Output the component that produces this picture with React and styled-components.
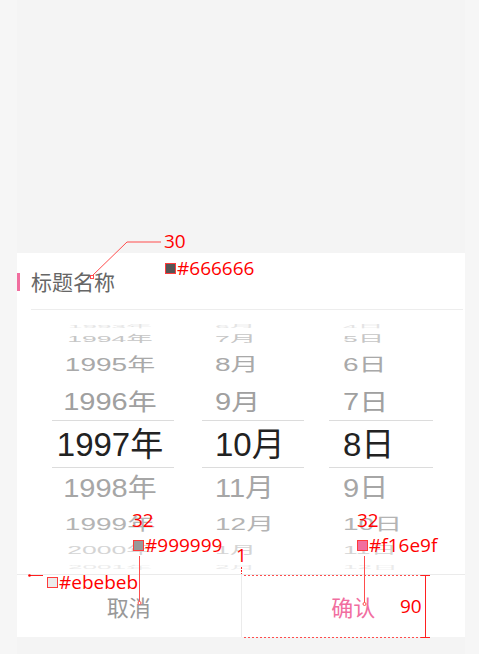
import React from "react";
import styled, { createGlobalStyle } from "styled-components";

const Global = createGlobalStyle`
  html, body { margin: 0; padding: 0; background: #f6f6f6; }
  #root { width: 479px; height: 654px; }
`;

const Page = styled.div`
  position: relative;
  width: 479px;
  height: 654px;
  box-sizing: border-box;
  padding: 0 14px 0 17px;
  background: #f6f6f6;
  overflow: hidden;
`;

const Column = styled.div`
  height: 100%;
  display: flex;
  flex-direction: column;
  justify-content: flex-end;
  padding-bottom: 17px;
  box-sizing: border-box;
  background: #f4f4f4;
`;

const Sheet = styled.div`
  height: 384px;
  background: #fff;
  display: flex;
  flex-direction: column;
`;

const Header = styled.div`
  display: flex;
  align-items: center;
`;

const Accent = styled.div`
  width: 3px;
  height: 18px;
  background: #f16e9f;
`;

const TitleWrap = styled.div`
  flex: 1;
  height: 56px;
  margin-left: 11px;
  margin-right: 2px;
  border-bottom: 1px solid #ededed;
  display: flex;
  align-items: center;
`;

const Title = styled.div`
  font-family: "Noto Sans CJK SC", sans-serif;
  font-size: 21px;
  color: #666666;
  line-height: 1;
`;

const PickerGrid = styled.div`
  height: 264px;
  box-sizing: border-box;
  padding: 10px 35px 0 35px;
  display: grid;
  grid-template-columns: 122px 102px 101px;
  column-gap: 28px;
  justify-content: start;
`;

const Wheel = styled.div`
  display: flex;
  flex-direction: column;
  margin-left: ${(p) => p.$ml}px;
`;

const Row = styled.div`
  height: ${(p) => p.$h}px;
  box-sizing: border-box;
  display: flex;
  align-items: center;
  justify-content: ${(p) => (p.$align === "center" ? "center" : "flex-start")};
  padding-left: ${(p) => p.$pl}px;
  padding-right: ${(p) => p.$pr}px;
  border-top: ${(p) => (p.$sel ? "1px solid #dcdcdc" : "none")};
  border-bottom: ${(p) => (p.$sel ? "1px solid #dcdcdc" : "none")};
  overflow: hidden;
`;

const Label = styled.span`
  font-family: "Liberation Sans", "Noto Sans CJK SC", sans-serif;
  font-size: ${(p) => p.$fs}px;
  color: ${(p) => p.$c};
  line-height: 1;
  white-space: nowrap;
  transform: scaleY(${(p) => p.$sy});
  transform-origin: ${(p) => (p.$align === "center" ? "center" : "left")} center;
  display: inline-block;
`;

const Footer = styled.div`
  flex: 1;
  display: flex;
  border-top: 1px solid #ebebeb;
`;

const Btn = styled.div`
  flex: 1;
  display: flex;
  align-items: center;
  justify-content: center;
  font-family: "Noto Sans CJK SC", sans-serif;
  font-size: 22px;
  color: ${(p) => (p.$primary ? "#f16e9f" : "#999999")};
  border-left: ${(p) => (p.$primary ? "1px solid #ebebeb" : "none")};
`;

/* ---------- annotation layer ---------- */
const Overlay = styled.svg`
  position: absolute;
  left: 0;
  top: 0;
  width: 479px;
  height: 654px;
  pointer-events: none;
`;

const Note = styled.div`
  position: absolute;
  left: ${(p) => p.$x}px;
  top: ${(p) => p.$y}px;
  display: flex;
  align-items: center;
  gap: 1px;
  font-family: "Open Sans", "Liberation Sans", sans-serif;
  font-size: 19px;
  line-height: 19px;
  color: #ff0000;
  white-space: nowrap;
`;

const Swatch = styled.span`
  width: 9px;
  height: 9px;
  border: 1px solid #ff3b3b;
  background: ${(p) => p.$c};
  display: inline-block;
`;

const GEOM = [
  { h: 13, fs: 26, sy: 0.16, c: "#e4e4e4" },
  { h: 13, fs: 26.5, sy: 0.36, c: "#c6c6c6" },
  { h: 38, fs: 28, sy: 0.66, c: "#a9a9a9" },
  { h: 36, fs: 29, sy: 0.8, c: "#a0a0a0" },
  { h: 48, fs: 33, sy: 1, c: "#222222", sel: true },
  { h: 40, fs: 29, sy: 0.9, c: "#a6a6a6" },
  { h: 32, fs: 28, sy: 0.62, c: "#b4b4b4" },
  { h: 20, fs: 26.5, sy: 0.42, c: "#d4d4d4" },
  { h: 14, fs: 26, sy: 0.18, c: "#ebebeb" },
];

const YEARS = ["1993年", "1994年", "1995年", "1996年", "1997年", "1998年", "1999年", "2000年", "2001年"];
const MONTHS = ["6月", "7月", "8月", "9月", "10月", "11月", "12月", "1月", "2月"];
const DAYS = ["4日", "5日", "6日", "7日", "8日", "9日", "10日", "11日", "12日"];

function WheelCol({ items, align, pl, pr, ml = 0 }) {
  return (
    <Wheel $ml={ml}>
      {GEOM.map((g, i) => (
        <Row key={i} $h={g.h} $sel={g.sel} $align={align} $pl={pl} $pr={pr}>
          <Label $fs={g.fs} $sy={g.sy} $c={g.c} $align={align}>
            {items[i]}
          </Label>
        </Row>
      ))}
    </Wheel>
  );
}

export default function App() {
  return (
    <>
      <Global />
      <Page>
        <Column>
          <Sheet>
            <Header>
              <Accent />
              <TitleWrap>
                <Title>标题名称</Title>
              </TitleWrap>
            </Header>
            <PickerGrid>
              <WheelCol items={YEARS} align="center" pl={0} pr={6} />
              <WheelCol items={MONTHS} align="left" pl={13} pr={0} />
              <WheelCol items={DAYS} align="left" pl={14} pr={0} ml={-3} />
            </PickerGrid>
            <Footer>
              <Btn>取消</Btn>
              <Btn $primary>确认</Btn>
            </Footer>
          </Sheet>
        </Column>

        <Overlay viewBox="0 0 479 654">
          <g fill="none" stroke="#ff4d4d" strokeWidth="1">
            <polyline points="92,276 127,242 161,242" />
            <rect x="90.5" y="275.5" width="3" height="3" fill="#fff" />
            <line x1="139.5" y1="556" x2="139.5" y2="602" />
            <circle cx="139.5" cy="603" r="1.5" fill="#fff" />
            <line x1="364.5" y1="556" x2="364.5" y2="603" />
            <circle cx="364.5" cy="604" r="1.5" fill="#fff" />
            <line x1="29" y1="575.5" x2="43" y2="575.5" stroke="#ff2020" />
            <line x1="241.5" y1="567" x2="241.5" y2="574" strokeDasharray="2 1" stroke="#ff2020" />
            <line x1="244" y1="575.5" x2="425" y2="575.5" strokeDasharray="2 2" />
            <line x1="244" y1="637.5" x2="425" y2="637.5" strokeDasharray="2 2" />
            <line x1="425.5" y1="575" x2="425.5" y2="637" stroke="#ff2020" />
            <line x1="421" y1="575.5" x2="430" y2="575.5" stroke="#ff2020" />
            <line x1="421" y1="637.5" x2="430" y2="637.5" stroke="#ff2020" />
          </g>
          <circle cx="29.5" cy="575.5" r="1.3" fill="#ff0000" />
        </Overlay>

        <Note $x={164} $y={232}>30</Note>
        <Note $x={165} $y={259}>
          <Swatch $c="#555555" />#666666
        </Note>
        <Note $x={132} $y={511}>32</Note>
        <Note $x={133} $y={536}>
          <Swatch $c="#999999" />#999999
        </Note>
        <Note $x={357} $y={511}>32</Note>
        <Note $x={357} $y={536}>
          <Swatch $c="#f16e9f" />#f16e9f
        </Note>
        <Note $x={47} $y={573}>
          <Swatch $c="#ebebeb" />#ebebeb
        </Note>
        <Note $x={236} $y={546}>1</Note>
        <Note $x={400} $y={597}>90</Note>
      </Page>
    </>
  );
}
